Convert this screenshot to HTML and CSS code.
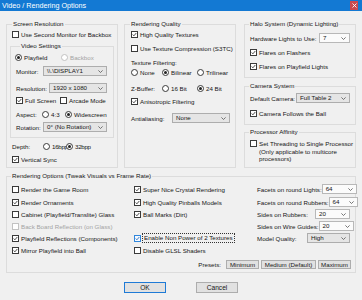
FILE: index.html
```html
<!DOCTYPE html>
<html>
<head>
<meta charset="utf-8">
<title>Video / Rendering Options</title>
<link rel="stylesheet" href="styles.css">
</head>
<body>
<div class="titlebar">
  <span class="title">Video / Rendering Options</span>
  <span class="close"><svg width="5" height="5" viewBox="0 0 5 5"><path d="M0.5 0.5L4.5 4.5M4.5 0.5L0.5 4.5" stroke="#fff" stroke-width="0.9"/></svg></span>
</div>
<div class="main">
  <div class="top">
    <!-- Column 1 -->
    <div class="group g-screen">
      <div class="gtitle">Screen Resolution</div>
      <div class="row mt2 ml5"><span class="ck"><span class="cb"></span><span>Use Second Monitor for Backbox</span></span></div>
      <div class="group g-video">
        <div class="gtitle gt-video">Video Settings</div>
        <div class="row mt3 ml4">
          <span class="ck w46"><span class="rb on"></span><span>Playfield</span></span>
          <span class="ck dis"><span class="rb"></span><span>Backbox</span></span>
        </div>
        <div class="row h10 mt4 ml5">
          <span class="lbl w27">Monitor:</span>
          <span class="combo w64"><span>\\.\DISPLAY1</span><svg class="chev" width="5" height="3" viewBox="0 0 5 3"><path d="M0.4 0.4L2.5 2.5L4.6 0.4" fill="none" stroke="#555" stroke-width="0.8"/></svg></span>
        </div>
        <div class="row h10 mt7 ml5">
          <span class="lbl w33">Resolution:</span>
          <span class="combo w58"><span>1920 x 1080</span><svg class="chev" width="5" height="3" viewBox="0 0 5 3"><path d="M0.4 0.4L2.5 2.5L4.6 0.4" fill="none" stroke="#555" stroke-width="0.8"/></svg></span>
        </div>
        <div class="row mt3 ml5">
          <span class="ck w44"><span class="cb"><svg width="5" height="5" viewBox="0 0 5 5"><path d="M0.7 2.5L1.9 3.8L4.3 1" fill="none" stroke="#222" stroke-width="0.8"/></svg></span><span>Full Screen</span></span>
          <span class="ck"><span class="cb"></span><span>Arcade Mode</span></span>
        </div>
        <div class="row mt5 ml5">
          <span class="lbl w26">Aspect:</span>
          <span class="ck w23"><span class="rb"></span><span>4:3</span></span>
          <span class="ck"><span class="rb on"></span><span>Widescreen</span></span>
        </div>
        <div class="row h10 mt3 ml5">
          <span class="lbl w27">Rotation:</span>
          <span class="combo w64"><span>0° (No Rotation)</span><svg class="chev" width="5" height="3" viewBox="0 0 5 3"><path d="M0.4 0.4L2.5 2.5L4.6 0.4" fill="none" stroke="#555" stroke-width="0.8"/></svg></span>
        </div>
      </div>
      <div class="row mt4 ml5">
        <span class="lbl w31">Depth:</span>
        <span class="ck w23 tight"><span class="rb"></span><span>16bpp</span></span>
        <span class="ck tight"><span class="rb on"></span><span>32bpp</span></span>
      </div>
      <div class="row mt4 ml5"><span class="ck"><span class="cb"><svg width="5" height="5" viewBox="0 0 5 5"><path d="M0.7 2.5L1.9 3.8L4.3 1" fill="none" stroke="#222" stroke-width="0.8"/></svg></span><span>Vertical Sync</span></span></div>
    </div>

    <!-- Column 2 -->
    <div class="group g-quality">
      <div class="gtitle">Rendering Quality</div>
      <div class="row mt2 ml6"><span class="ck"><span class="cb"><svg width="5" height="5" viewBox="0 0 5 5"><path d="M0.7 2.5L1.9 3.8L4.3 1" fill="none" stroke="#222" stroke-width="0.8"/></svg></span><span>High Quality Textures</span></span></div>
      <div class="row mt5 ml6"><span class="ck"><span class="cb"></span><span>Use Texture Compression (S3TC)</span></span></div>
      <div class="row mt5 ml6"><span class="lbl">Texture Filtering:</span></div>
      <div class="row mt1 ml6">
        <span class="ck w31"><span class="rb"></span><span>None</span></span>
        <span class="ck w35"><span class="rb on"></span><span>Bilinear</span></span>
        <span class="ck"><span class="rb"></span><span>Trilinear</span></span>
      </div>
      <div class="row mt7 ml6">
        <span class="lbl w31">Z-Buffer:</span>
        <span class="ck w35"><span class="rb"></span><span>16 Bit</span></span>
        <span class="ck"><span class="rb on"></span><span>24 Bit</span></span>
      </div>
      <div class="row mt4 ml6"><span class="ck"><span class="cb"><svg width="5" height="5" viewBox="0 0 5 5"><path d="M0.7 2.5L1.9 3.8L4.3 1" fill="none" stroke="#222" stroke-width="0.8"/></svg></span><span>Anisotropic Filtering</span></span></div>
      <div class="row h10 mt7 ml6">
        <span class="lbl w41">Antialiasing:</span>
        <span class="combo w58"><span>None</span><svg class="chev" width="5" height="3" viewBox="0 0 5 3"><path d="M0.4 0.4L2.5 2.5L4.6 0.4" fill="none" stroke="#555" stroke-width="0.8"/></svg></span>
      </div>
    </div>

    <!-- Column 3 -->
    <div class="col3">
      <div class="group g-halo">
        <div class="gtitle gt4">Halo System (Dynamic Lighting)</div>
        <div class="row h10 mt5 ml5">
          <span class="lbl w69">Hardware Lights to Use:</span>
          <span class="combo white w31"><span>7</span><svg class="chev" width="5" height="3" viewBox="0 0 5 3"><path d="M0.4 0.4L2.5 2.5L4.6 0.4" fill="none" stroke="#555" stroke-width="0.8"/></svg></span>
        </div>
        <div class="row mt5 ml5"><span class="ck"><span class="cb"><svg width="5" height="5" viewBox="0 0 5 5"><path d="M0.7 2.5L1.9 3.8L4.3 1" fill="none" stroke="#222" stroke-width="0.8"/></svg></span><span>Flares on Flashers</span></span></div>
        <div class="row mt5 ml5"><span class="ck"><span class="cb"><svg width="5" height="5" viewBox="0 0 5 5"><path d="M0.7 2.5L1.9 3.8L4.3 1" fill="none" stroke="#222" stroke-width="0.8"/></svg></span><span>Flares on Playfield Lights</span></span></div>
      </div>
      <div class="group g-camera">
        <div class="gtitle gt4">Camera System</div>
        <div class="row h10 mt3 ml5">
          <span class="lbl w46">Default Camera:</span>
          <span class="combo w54"><span>Full Table 2</span><svg class="chev" width="5" height="3" viewBox="0 0 5 3"><path d="M0.4 0.4L2.5 2.5L4.6 0.4" fill="none" stroke="#555" stroke-width="0.8"/></svg></span>
        </div>
        <div class="row mt6 ml5"><span class="ck"><span class="cb"><svg width="5" height="5" viewBox="0 0 5 5"><path d="M0.7 2.5L1.9 3.8L4.3 1" fill="none" stroke="#222" stroke-width="0.8"/></svg></span><span>Camera Follows the Ball</span></span></div>
      </div>
      <div class="group g-proc">
        <div class="gtitle gt4">Processor Affinity</div>
        <div class="multi mt4 ml5">
          <span class="cb"></span>
          <span class="mtext">Set Threading to Single Processor<br>(Only applicable to multicore<br>processors)</span>
        </div>
      </div>
    </div>
  </div>

  <!-- Rendering options -->
  <div class="group g-opts">
    <div class="gtitle gt4">Rendering Options (Tweak Visuals vs Frame Rate)</div>
    <div class="ro-cols">
      <div class="ro-a">
        <div class="rr"><span class="ck"><span class="cb"></span><span>Render the Game Room</span></span></div>
        <div class="rr"><span class="ck"><span class="cb"><svg width="5" height="5" viewBox="0 0 5 5"><path d="M0.7 2.5L1.9 3.8L4.3 1" fill="none" stroke="#222" stroke-width="0.8"/></svg></span><span>Render Ornaments</span></span></div>
        <div class="rr"><span class="ck"><span class="cb"></span><span>Cabinet (Playfield/Translite) Glass</span></span></div>
        <div class="rr"><span class="ck dis"><span class="cb"></span><span>Back Board Reflection (on Glass)</span></span></div>
        <div class="rr"><span class="ck"><span class="cb"><svg width="5" height="5" viewBox="0 0 5 5"><path d="M0.7 2.5L1.9 3.8L4.3 1" fill="none" stroke="#222" stroke-width="0.8"/></svg></span><span>Playfield Reflections (Components)</span></span></div>
        <div class="rr"><span class="ck"><span class="cb"><svg width="5" height="5" viewBox="0 0 5 5"><path d="M0.7 2.5L1.9 3.8L4.3 1" fill="none" stroke="#222" stroke-width="0.8"/></svg></span><span>Mirror Playfield into Ball</span></span></div>
      </div>
      <div class="ro-b">
        <div class="rr"><span class="ck"><span class="cb"><svg width="5" height="5" viewBox="0 0 5 5"><path d="M0.7 2.5L1.9 3.8L4.3 1" fill="none" stroke="#222" stroke-width="0.8"/></svg></span><span>Super Nice Crystal Rendering</span></span></div>
        <div class="rr"><span class="ck"><span class="cb"><svg width="5" height="5" viewBox="0 0 5 5"><path d="M0.7 2.5L1.9 3.8L4.3 1" fill="none" stroke="#222" stroke-width="0.8"/></svg></span><span>High Quality Pinballs Models</span></span></div>
        <div class="rr"><span class="ck"><span class="cb"><svg width="5" height="5" viewBox="0 0 5 5"><path d="M0.7 2.5L1.9 3.8L4.3 1" fill="none" stroke="#222" stroke-width="0.8"/></svg></span><span>Ball Marks (Dirt)</span></span></div>
        <div class="rr"></div>
        <div class="rr"><span class="ck"><span class="cb focus"><svg width="5" height="5" viewBox="0 0 5 5"><path d="M0.7 2.5L1.9 3.8L4.3 1" fill="none" stroke="#1460b8" stroke-width="0.8"/></svg></span><span class="focusrect">Enable Non Power of 2 Textures</span></span></div>
        <div class="rr"><span class="ck"><span class="cb"></span><span>Disable GLSL Shaders</span></span></div>
      </div>
      <div class="ro-c">
        <div class="rr sb"><span class="lbl">Facets on round Lights:</span><span class="combo white w35"><span>64</span><svg class="chev" width="5" height="3" viewBox="0 0 5 3"><path d="M0.4 0.4L2.5 2.5L4.6 0.4" fill="none" stroke="#555" stroke-width="0.8"/></svg></span></div>
        <div class="rr sb"><span class="lbl">Facets on round Rubbers:</span><span class="combo white w29"><span>64</span><svg class="chev" width="5" height="3" viewBox="0 0 5 3"><path d="M0.4 0.4L2.5 2.5L4.6 0.4" fill="none" stroke="#555" stroke-width="0.8"/></svg></span></div>
        <div class="rr sb"><span class="lbl">Sides on Rubbers:</span><span class="combo white w35"><span>20</span><svg class="chev" width="5" height="3" viewBox="0 0 5 3"><path d="M0.4 0.4L2.5 2.5L4.6 0.4" fill="none" stroke="#555" stroke-width="0.8"/></svg></span></div>
        <div class="rr sb"><span class="lbl">Sides on Wire Guides:</span><span class="combo white w35"><span>20</span><svg class="chev" width="5" height="3" viewBox="0 0 5 3"><path d="M0.4 0.4L2.5 2.5L4.6 0.4" fill="none" stroke="#555" stroke-width="0.8"/></svg></span></div>
        <div class="rr sb"><span class="lbl">Model Quality:</span><span class="combo w43"><span>High</span><svg class="chev" width="5" height="3" viewBox="0 0 5 3"><path d="M0.4 0.4L2.5 2.5L4.6 0.4" fill="none" stroke="#555" stroke-width="0.8"/></svg></span></div>
      </div>
    </div>
    <div class="presets">
      <span class="lbl plabel">Presets:</span>
      <span class="pbtn w33">Minimum</span>
      <span class="pbtn w55">Medium (Default)</span>
      <span class="pbtn w33">Maximum</span>
    </div>
  </div>

  <div class="buttons">
    <span class="btn default">OK</span>
    <span class="btn">Cancel</span>
  </div>
</div>
</body>
</html>
```

FILE: styles.css
```css
* { box-sizing: border-box; }
html, body { margin: 0; padding: 0; }
body {
  width: 362px;
  height: 300px;
  overflow: hidden;
  background: #f0f0f0;
  font-family: "Liberation Sans", Arial, sans-serif;
  font-size: 6.2px;
  color: #161616;
}

.titlebar {
  height: 11px;
  background: #1379d3;
  color: #fff;
  display: flex;
  align-items: flex-start;
  justify-content: space-between;
  padding-left: 2px;
}
.title { font-size: 7.2px; line-height: 11px; }
.close {
  width: 8px;
  height: 9px;
  margin: 1px 4px 0 0;
  background: #c94a50;
  display: flex;
  align-items: center;
  justify-content: center;
}
.close svg { display: block; }

.main { padding: 13px 6px 0 6px; }
.top { display: flex; align-items: flex-start; }

.group { border: 1px solid #dcdcdc; }
.gtitle {
  margin: -5px 0 0 5px;
  height: 8px;
  line-height: 8px;
  padding: 0 1px;
  background: #f0f0f0;
  width: max-content;
}
.gt4 { margin-left: 4px; }
.gt-video { margin-left: 9px; }

.g-screen { width: 112px; height: 144px; }
.g-video { margin: 7px 3px 0 3px; height: 92px; }
.g-quality { width: 112px; height: 144px; margin-left: 6px; }
.col3 { width: 112px; margin-left: 8px; }
.g-halo { height: 54px; }
.g-camera { height: 39px; margin-top: 8px; }
.g-proc { height: 36px; margin-top: 7px; }

.row { display: flex; align-items: center; height: 9px; line-height: 9px; white-space: nowrap; }
.h10 { height: 10px; }
.mt1 { margin-top: 1px; }
.mt2 { margin-top: 2px; }
.mt3 { margin-top: 3px; }
.mt4 { margin-top: 4px; }
.mt5 { margin-top: 5px; }
.mt6 { margin-top: 6px; }
.mt7 { margin-top: 7px; }
.ml4 { margin-left: 4px; }
.ml5 { margin-left: 5px; }
.ml6 { margin-left: 6px; }

.w20 { width: 20px; flex: none; }
.w23 { width: 23px; flex: none; }
.w26 { width: 26px; flex: none; }
.w27 { width: 27px; flex: none; }
.w29 { width: 29px; flex: none; }
.w31 { width: 31px; flex: none; }
.w33 { width: 33px; flex: none; }
.w35 { width: 35px; flex: none; }
.w41 { width: 41px; flex: none; }
.w43 { width: 43px; flex: none; }
.w44 { width: 44px; flex: none; }
.w46 { width: 46px; flex: none; }
.w54 { width: 54px; flex: none; }
.w55 { width: 55px; flex: none; }
.w58 { width: 58px; flex: none; }
.w64 { width: 64px; flex: none; }
.w69 { width: 69px; flex: none; }

.lbl { white-space: nowrap; }
.ck { display: flex; align-items: center; gap: 2px; white-space: nowrap; }
.tight { letter-spacing: -0.3px; }

.cb {
  width: 7px;
  height: 7px;
  flex: none;
  border: 1px solid #3a3a3a;
  background: #fff;
  display: flex;
  align-items: center;
  justify-content: center;
}
.cb svg { display: block; }
.cb.focus { border-color: #2f86dc; background: #f4f9ff; }

.rb {
  width: 7px;
  height: 7px;
  flex: none;
  border: 1px solid #3a3a3a;
  border-radius: 50%;
  background: #fff;
  display: flex;
  align-items: center;
  justify-content: center;
}
.rb.on::after {
  content: "";
  display: block;
  width: 3px;
  height: 3px;
  border-radius: 50%;
  background: #222;
}

.dis { color: #a3a3a3; }
.dis .cb, .dis .rb { border-color: #c2c2c2; }

.combo {
  height: 10px;
  border: 1px solid #adadad;
  background: #e5e5e5;
  display: flex;
  align-items: center;
  justify-content: space-between;
  padding: 0 3px 0 3px;
  white-space: nowrap;
  line-height: 8px;
}
.combo.white { background: #fbfbfb; border-color: #b8b8b8; }
.chev { display: block; flex: none; }

.multi { display: flex; align-items: flex-start; gap: 2px; }
.multi .cb { margin-top: 0.25px; }
.mtext { line-height: 7.5px; }

/* Rendering options */
.g-opts { height: 97px; margin-top: 8px; }
.ro-cols { display: flex; margin: 3px 0 0 5px; }
.ro-a { width: 122px; }
.ro-b { width: 123px; }
.ro-c { width: 93px; }
.rr { height: 12px; display: flex; align-items: center; white-space: nowrap; }
.rr:first-child { margin-bottom: 1px; }
.rr.sb { justify-content: space-between; }
.focusrect { outline: 1px dotted #333; outline-offset: 0; padding: 0 1px; line-height: 8px; }

.presets {
  display: flex;
  justify-content: flex-end;
  align-items: center;
  height: 9px;
  margin: 4px 4px 0 0;
  gap: 2px;
}
.plabel { margin-right: 3px; }
.pbtn {
  height: 9px;
  border: 1px solid #adadad;
  background: #e1e1e1;
  display: flex;
  align-items: center;
  justify-content: center;
  white-space: nowrap;
}

.buttons {
  display: flex;
  justify-content: center;
  gap: 30px;
  margin-top: 9px;
}
.btn {
  width: 42px;
  height: 11px;
  border: 1px solid #adadad;
  background: #e1e1e1;
  display: flex;
  align-items: center;
  justify-content: center;
  font-size: 6.6px;
}
.btn.default { border-color: #1e7ad6; }
```
